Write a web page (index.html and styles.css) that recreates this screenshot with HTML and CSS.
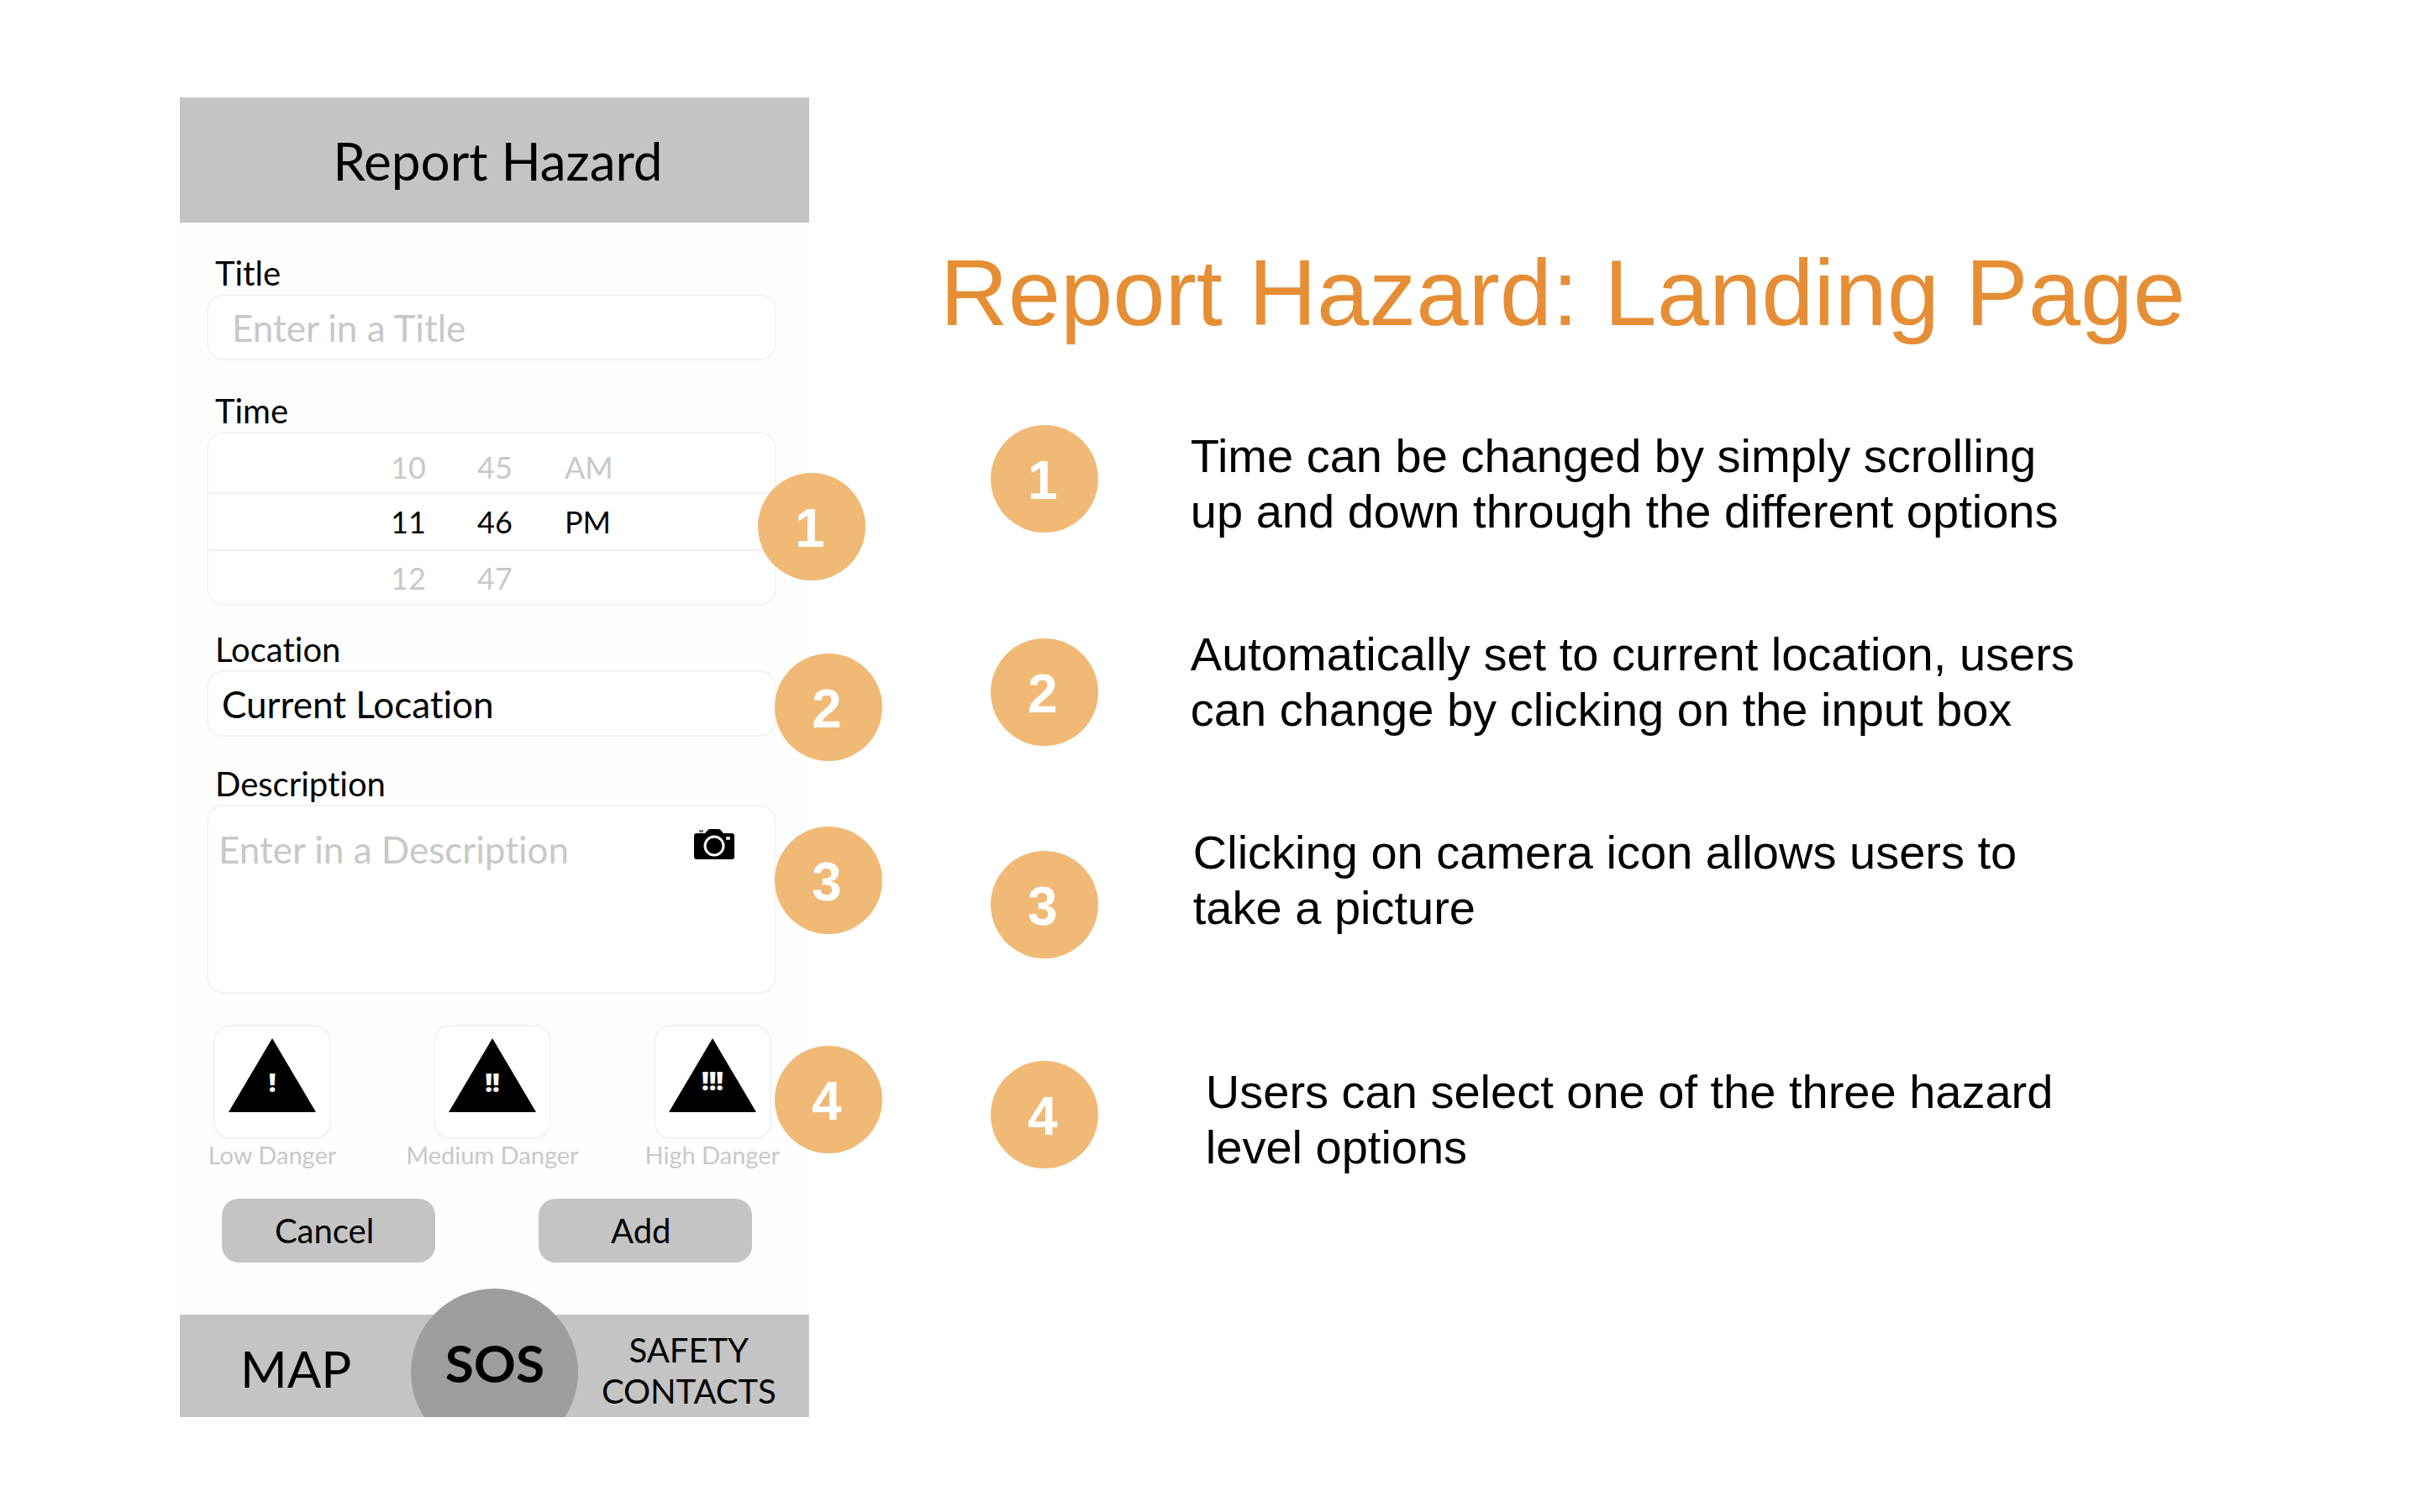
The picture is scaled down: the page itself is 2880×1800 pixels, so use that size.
FILE: index.html
```html
<!DOCTYPE html>
<html lang="en">
<head>
<meta charset="utf-8">
<title>Report Hazard: Landing Page</title>
<link rel="stylesheet" href="styles.css">
</head>
<body>
<main class="slide">
  <section class="phone" aria-label="Report Hazard screen">
    <header class="phone-header"><h2 class="phone-title">Report Hazard</h2></header>
    <form class="form">
      <div class="field">
        <label class="label" for="title">Title</label>
        <input class="input input-title" id="title" type="text" placeholder="Enter in a Title">
      </div>
      <div class="field">
        <span class="label" id="time-label">Time</span>
        <div class="picker" role="group" aria-labelledby="time-label">
          <div class="picker-row">
            <button class="option" type="button">10</button>
            <button class="option" type="button">45</button>
            <button class="option" type="button">AM</button>
          </div>
          <div class="picker-row picker-current">
            <button class="option" type="button">11</button>
            <button class="option" type="button">46</button>
            <button class="option" type="button">PM</button>
          </div>
          <div class="picker-row">
            <button class="option" type="button">12</button>
            <button class="option" type="button">47</button>
          </div>
          <span class="badge pin pin-time">1</span>
        </div>
      </div>
      <div class="field field-location">
        <label class="label" for="location">Location</label>
        <div class="control">
          <input class="input" id="location" type="text" value="Current Location">
          <span class="badge pin">2</span>
        </div>
      </div>
      <div class="field field-description">
        <label class="label" for="description">Description</label>
        <div class="control">
          <textarea class="input textarea" id="description" placeholder="Enter in a Description"></textarea>
          <button class="camera" type="button" aria-label="Take a picture">
            <svg class="camera-icon" viewBox="0 0 48 36">
              <path fill="#000" d="M3 5H13L16 1.500Q17 0 19 0H29Q31 0 32 1.500L35 5H45Q48 5 48 8V33Q48 36 45 36H3Q0 36 0 33V8Q0 5 3 5Z"/>
              <rect x="6" y="1" width="5" height="3" fill="#777"/>
              <circle cx="24" cy="20" r="11" fill="none" stroke="#fff" stroke-width="3"/>
              <rect x="38" y="9" width="5" height="4" rx="1" fill="#ddd"/>
            </svg>
          </button>
          <span class="badge pin">3</span>
        </div>
      </div>
      <fieldset class="levels">
        <label class="level">
          <span class="level-box">
            <input class="level-radio" type="radio" name="level">
            <svg class="level-icon" viewBox="0 0 104 88"><path d="M52 0L104 88H0Z"/><text class="mark" x="52" y="64">!</text></svg>
          </span>
          <span class="level-name">Low Danger</span>
        </label>
        <label class="level">
          <span class="level-box">
            <input class="level-radio" type="radio" name="level">
            <svg class="level-icon" viewBox="0 0 104 88"><path d="M52 0L104 88H0Z"/><text class="mark" x="52" y="64">!!</text></svg>
          </span>
          <span class="level-name">Medium Danger</span>
        </label>
        <label class="level">
          <span class="level-box">
            <input class="level-radio" type="radio" name="level">
            <svg class="level-icon" viewBox="0 0 104 88"><path d="M52 0L104 88H0Z"/><text class="mark" x="52" y="62">!!!</text></svg>
          </span>
          <span class="level-name">High Danger</span>
        </label>
        <span class="badge pin pin-level">4</span>
      </fieldset>
      <div class="actions">
        <button class="action" type="button">Cancel</button>
        <button class="action" type="submit">Add</button>
      </div>
    </form>
    <nav class="nav">
      <a class="nav-map" href="#map">MAP</a>
      <a class="nav-contacts" href="#contacts">SAFETY CONTACTS</a>
      <a class="nav-sos" href="#sos">SOS</a>
    </nav>
  </section>
  <section class="notes">
    <h1 class="heading">Report Hazard: Landing Page</h1>
    <ol class="note-list">
      <li class="note"><span class="badge">1</span><p class="note-text">Time can be changed by simply scrolling up and down through the different options</p></li>
      <li class="note note-location"><span class="badge">2</span><p class="note-text">Automatically set to current location, users can change by clicking on the input box</p></li>
      <li class="note note-camera"><span class="badge">3</span><p class="note-text">Clicking on camera icon allows users to take a picture</p></li>
      <li class="note note-level"><span class="badge">4</span><p class="note-text">Users can select one of the three hazard level options</p></li>
    </ol>
  </section>
</main>
</body>
</html>
```
FILE: styles.css
```css
* { box-sizing: border-box; }

body {
  margin: 0;
  background: #fff;
  color: #000;
  font-family: "Liberation Sans", Arial, sans-serif;
}

.slide {
  display: grid;
  grid-template-columns: 26vw 1fr;
  column-gap: 156px;
  align-items: start;
  padding: 116px 200px 100px 214px;
}

/* Phone mock-up */
.phone {
  font-family: Lato, "Open Sans", sans-serif;
  font-variant-ligatures: none;
  background: #fefefe;
}

.phone-header {
  display: flex;
  align-items: center;
  justify-content: center;
  height: 149px;
  padding-left: 8px;
  background: #c4c4c4;
}

.phone-title {
  margin: 0;
  font-size: 62px;
  font-weight: 400;
}

.form { padding: 35px 39px 62px 32px; }

.field { margin-bottom: 35px; }

.field:has(.picker) { margin-bottom: 27px; }

.field-location { margin-bottom: 31px; }

.field-description { margin-bottom: 37px; }

.label {
  display: block;
  padding-left: 10px;
  font-size: 40px;
  line-height: 50px;
}

.control,
.picker {
  position: relative;
}

.input,
.picker,
.level-box {
  border: 2px solid #f3f3f3;
  border-radius: 20px;
  background: #fff;
}

.input {
  display: block;
  width: 100%;
  height: 79px;
  margin: 0;
  padding: 0 16px;
  color: #000;
  font: inherit;
  font-size: 44px;
  font-variant-ligatures: none;
}

.input-title { padding: 0 28px; }

.input::placeholder { color: #c8c8c8; opacity: 1; }

.textarea {
  height: 225px;
  padding: 24px 12px;
  line-height: 54px;
  resize: none;
}

.picker-row {
  display: grid;
  grid-template-columns: 103px 104px 104px;
  align-items: center;
  height: 63px;
  padding-left: 217px;
}

.picker-row:first-child { height: 70px; padding-top: 10px; }

.picker-row.picker-current {
  height: 70px;
  border: solid #efefef;
  border-width: 2px 0;
}

.option {
  padding: 0;
  border: 0;
  background: none;
  color: #c8c8c8;
  font: inherit;
  font-size: 36px;
  text-align: left;
}

.picker-current .option { color: #000; }

.camera {
  position: absolute;
  top: 29px;
  right: 50px;
  padding: 0;
  border: 0;
  background: none;
}

.camera-icon { display: block; width: 48px; height: 36px; }

.badge {
  display: flex;
  align-items: center;
  justify-content: center;
  width: 128px;
  height: 128px;
  padding: 4px 4px 0 0;
  border-radius: 50%;
  background: #f0b975;
  color: #fff;
  font: bold 64px/72px "Liberation Sans", Arial, sans-serif;
}

.pin {
  position: absolute;
  right: -126px;
  top: -20px;
}

.pin-time { top: 47px; right: -108px; }

.control .textarea ~ .pin { top: 26px; }

.pin-level { top: 25px; }

.levels {
  position: relative;
  display: flex;
  justify-content: space-between;
  margin: 0 0 33px;
  padding: 0 6px 0 8px;
  border: 0;
}

.level {
  display: flex;
  flex-direction: column;
  align-items: center;
  width: 140px;
}

.level-box {
  position: relative;
  display: grid;
  justify-items: center;
  width: 140px;
  height: 136px;
  padding-top: 14px;
}

.level-radio {
  position: absolute;
  inset: 0;
  margin: 0;
  appearance: none;
}

.level-icon { width: 104px; height: 88px; }

.mark {
  fill: #fff;
  font: 800 30px "Open Sans", sans-serif;
  text-anchor: middle;
}

.level-name {
  color: #c8c8c8;
  font-size: 29px;
  line-height: 38px;
  white-space: nowrap;
}

.actions {
  display: flex;
  justify-content: space-between;
  padding: 0 29px 0 18px;
}

.action {
  width: 254px;
  height: 76px;
  padding: 0 10px 0 0;
  border: 0;
  border-radius: 20px;
  background: #c4c4c4;
  color: #000;
  font: inherit;
  font-size: 40px;
}

.nav {
  position: relative;
  display: flex;
  align-items: center;
  justify-content: space-between;
  height: 122px;
  padding: 0 30px 0 72px;
  background: #c4c4c4;
  clip-path: inset(-40px 0 0 0);
}

.nav a { color: #000; text-decoration: none; text-align: center; }

.nav-map { padding-top: 6px; font-size: 60px; }

.nav-contacts {
  width: 226px;
  padding-top: 12px;
  font-size: 40px;
  line-height: 49px;
}

.nav .nav-sos {
  position: absolute;
  top: -31px;
  left: calc(50% - 99px);
  width: 199px;
  height: 199px;
  border-radius: 50%;
  background: #9d9d9d;
  font-size: 62px;
  font-weight: 700;
  line-height: 176px;
}

/* Notes */
.heading {
  margin: 0;
  padding-top: 169px;
  color: #e58e35;
  font-size: 112px;
  font-weight: 400;
  line-height: 128px;
  white-space: nowrap;
}

.note-list {
  display: flex;
  flex-direction: column;
  gap: 94px;
  margin: 0;
  padding: 93px 0 0 60px;
  list-style: none;
}

.note {
  display: grid;
  grid-template-columns: 128px minmax(0, 1060px);
  column-gap: 110px;
  align-items: start;
}

.note-text {
  margin: 0;
  padding-top: 4px;
  font-size: 56px;
  line-height: 66px;
}

.note-location { padding-top: 10px; }

.note-location .badge { margin-top: 14px; }

.note-camera .badge { margin-top: 31px; }

.note-location .note-text,
.note-camera .note-text { padding-top: 0; }

.note-camera { column-gap: 113px; }

.note-level { column-gap: 128px; padding-top: 28px; }
```
